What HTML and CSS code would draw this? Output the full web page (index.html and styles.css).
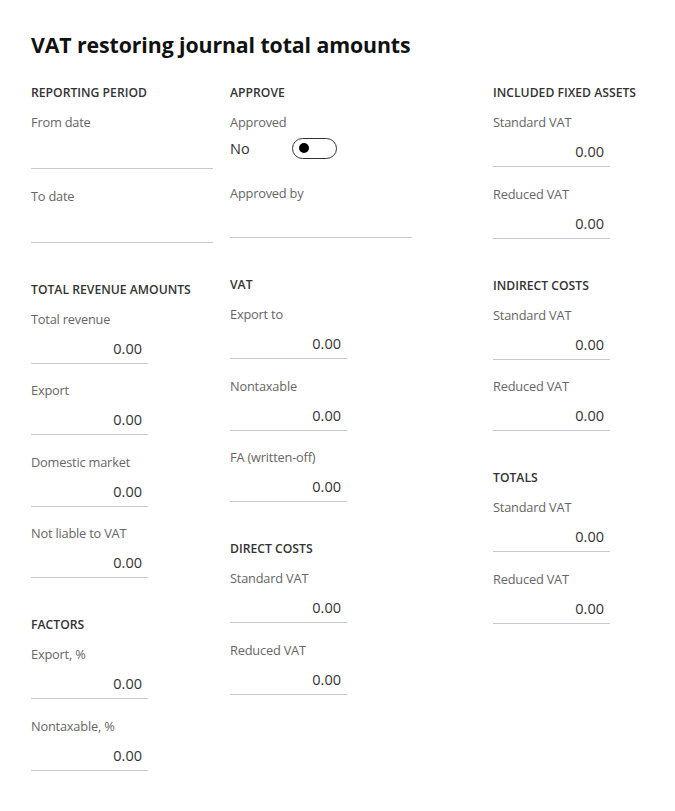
FILE: index.html
```html
<!DOCTYPE html>
<html>
<head>
<meta charset="utf-8">
<link rel="stylesheet" href="styles.css">
</head>
<body>
<div class="page">
  <h1 class="title">VAT restoring journal total amounts</h1>
  <div class="grid">
    <div class="col">
      <section class="group">
        <div class="hdr">REPORTING PERIOD</div>
        <div class="field"><div class="lbl">From date</div><div class="inp wide date"></div></div>
        <div class="field"><div class="lbl">To date</div><div class="inp wide date"></div></div>
      </section>
      <section class="group">
        <div class="hdr">TOTAL REVENUE AMOUNTS</div>
        <div class="field"><div class="lbl">Total revenue</div><div class="inp">0.00</div></div>
        <div class="field"><div class="lbl">Export</div><div class="inp">0.00</div></div>
        <div class="field"><div class="lbl">Domestic market</div><div class="inp">0.00</div></div>
        <div class="field"><div class="lbl">Not liable to VAT</div><div class="inp">0.00</div></div>
      </section>
      <section class="group">
        <div class="hdr">FACTORS</div>
        <div class="field"><div class="lbl">Export, %</div><div class="inp">0.00</div></div>
        <div class="field"><div class="lbl">Nontaxable, %</div><div class="inp">0.00</div></div>
      </section>
    </div>
    <div class="col">
      <section class="group">
        <div class="hdr">APPROVE</div>
        <div class="field">
          <div class="lbl">Approved</div>
          <div class="toggle-row"><span class="tval">No</span><span class="toggle"><span class="knob"></span></span></div>
        </div>
        <div class="field approver"><div class="lbl">Approved by</div><div class="inp wide"></div></div>
      </section>
      <section class="group">
        <div class="hdr">VAT</div>
        <div class="field"><div class="lbl">Export to</div><div class="inp">0.00</div></div>
        <div class="field"><div class="lbl">Nontaxable</div><div class="inp">0.00</div></div>
        <div class="field"><div class="lbl">FA (written-off)</div><div class="inp">0.00</div></div>
      </section>
      <section class="group">
        <div class="hdr">DIRECT COSTS</div>
        <div class="field"><div class="lbl">Standard VAT</div><div class="inp">0.00</div></div>
        <div class="field"><div class="lbl">Reduced VAT</div><div class="inp">0.00</div></div>
      </section>
    </div>
    <div class="col">
      <section class="group">
        <div class="hdr">INCLUDED FIXED ASSETS</div>
        <div class="field"><div class="lbl">Standard VAT</div><div class="inp">0.00</div></div>
        <div class="field"><div class="lbl">Reduced VAT</div><div class="inp">0.00</div></div>
      </section>
      <section class="group">
        <div class="hdr">INDIRECT COSTS</div>
        <div class="field"><div class="lbl">Standard VAT</div><div class="inp">0.00</div></div>
        <div class="field"><div class="lbl">Reduced VAT</div><div class="inp">0.00</div></div>
      </section>
      <section class="group">
        <div class="hdr">TOTALS</div>
        <div class="field"><div class="lbl">Standard VAT</div><div class="inp">0.00</div></div>
        <div class="field"><div class="lbl">Reduced VAT</div><div class="inp">0.00</div></div>
      </section>
    </div>
  </div>
</div>
</body>
</html>
```

FILE: styles.css
```css
html, body {
  margin: 0;
  padding: 0;
  background: #ffffff;
}
body {
  font-family: "Open Sans", "Noto Sans", "Liberation Sans", sans-serif;
  color: #333333;
}
.page {
  padding: 30px 0 0 31px;
}
.title {
  margin: 0;
  font-size: 21.3px;
  line-height: 30px;
  font-weight: 700;
  color: #111111;
  letter-spacing: -0.1px;
}
.grid {
  display: grid;
  grid-template-columns: 199px 263px 170px;
  margin-top: 25px;
}
.group + .group {
  margin-top: 39px;
}
.hdr {
  font-size: 12.2px;
  line-height: 16px;
  font-weight: 600;
  color: #333333;
  margin-bottom: 12px;
  white-space: nowrap;
}
.field + .field {
  margin-top: 17.5px;
}
.lbl {
  font-size: 12.8px;
  line-height: 18px;
  color: #666666;
  letter-spacing: -0.2px;
}
.inp {
  width: 111px;
  height: 20px;
  padding: 11px 6px 4px 0;
  border-bottom: 1px solid #c8c8c8;
  text-align: right;
  font-size: 14.5px;
  line-height: 20px;
  color: #333333;
}
.inp.wide {
  width: 182px;
  padding-right: 0;
}
.inp.date {
  padding-top: 13px;
}
.toggle-row {
  display: flex;
  align-items: center;
  height: 20px;
  margin-top: 7px;
}
.tval {
  width: 62px;
  font-size: 14.5px;
  color: #333333;
}
.toggle {
  box-sizing: border-box;
  width: 45px;
  height: 21px;
  border: 1px solid #333333;
  border-radius: 11px;
  display: flex;
  align-items: center;
  padding-left: 6px;
}
.knob {
  width: 10px;
  height: 10px;
  border-radius: 50%;
  background: #000000;
}
.field.approver {
  margin-top: 26px;
}
```
